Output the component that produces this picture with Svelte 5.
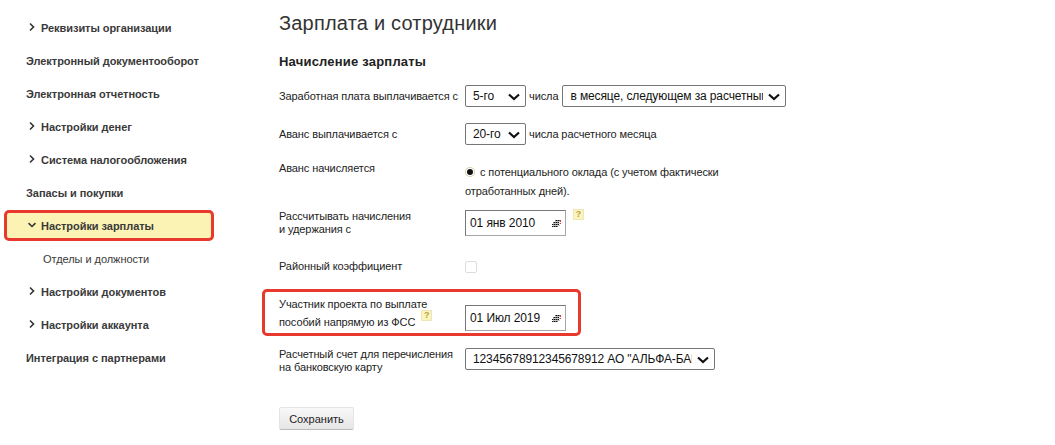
<script lang="ts">
    const menu = [
        { label: 'Реквизиты организации', arrow: 'right' },
        { label: 'Электронный документооборот' },
        { label: 'Электронная отчетность' },
        { label: 'Настройки денег', arrow: 'right' },
        { label: 'Система налогообложения', arrow: 'right' },
        { label: 'Запасы и покупки' },
        { label: 'Настройки зарплаты', arrow: 'down', active: true },
        { label: 'Отделы и должности', sub: true },
        { label: 'Настройки документов', arrow: 'right' },
        { label: 'Настройки аккаунта', arrow: 'right' },
        { label: 'Интеграция с партнерами' }
    ];
</script>

{#snippet chevron()}
    <svg class="select-arrow" width="14" height="8" viewBox="0 0 14 8">
        <path d="M2 1.5 L7 6 L12 1.5" fill="none" stroke="#111" stroke-width="2.2" />
    </svg>
{/snippet}

{#snippet calendar()}
    <svg class="cal" width="9" height="7" viewBox="0 0 9 7">
        <path d="M3 1h5v1H3zM1 3h7v1H1zM1 5h7v1H1z" fill="#c4c4c4" />
        <path d="M3 0h5v1H3zM1 2h6v1H1zM1 4h6v1H1zM0 6h6v1H0z" fill="#777" />
        <path d="M4 0h1v1H4zM6 0h1v1H6zM2 2h1v1H2zM4 2h1v1H4zM6 2h1v1H6zM0 4h1v1H0zM2 4h1v1H2zM4 4h1v1H4zM6 4h1v1H6zM0 6h1v1H0zM2 6h1v1H2zM4 6h1v1H4z" fill="#111" />
        <path d="M8 0h1v2H8zM8 3h1v1H8z" fill="#e0313a" />
    </svg>
{/snippet}

{#snippet hint()}
    <span class="hint">?</span>
{/snippet}

<div class="page">
    <nav class="sidebar">
        {#each menu as item}
            <a class="item" class:active={item.active} class:sub={item.sub} href="#top">
                {#if item.arrow === 'right'}
                    <svg class="arrow" width="8" height="10" viewBox="0 0 8 10">
                        <path d="M2 1.5 L5.5 5 L2 8.5" fill="none" stroke="#333" stroke-width="1.6" />
                    </svg>
                {:else if item.arrow === 'down'}
                    <svg class="arrow" width="8" height="10" viewBox="0 0 8 10">
                        <path d="M0.5 3.2 L4 6.5 L7.5 3.2" fill="none" stroke="#333" stroke-width="1.6" />
                    </svg>
                {/if}
                {item.label}
            </a>
        {/each}
    </nav>

    <main class="content">
        <h1>Зарплата и сотрудники</h1>
        <h2>Начисление зарплаты</h2>

        <div class="row row-salary">
            <div class="label">Заработная плата выплачивается с</div>
            <div class="field">
                <div class="select" style="width: 61px">
                    <select><option>5-го</option></select>
                    {@render chevron()}
                </div>
                <span class="after">числа</span>
                <div class="select" style="width: 224px">
                    <select><option>в месяце, следующем за расчетным</option></select>
                    {@render chevron()}
                </div>
            </div>
        </div>

        <div class="row row-advance">
            <div class="label">Аванс выплачивается с</div>
            <div class="field">
                <div class="select" style="width: 61px">
                    <select><option>20-го</option></select>
                    {@render chevron()}
                </div>
                <span class="after">числа расчетного месяца</span>
            </div>
        </div>

        <div class="row row-radio">
            <div class="label">Аванс начисляется</div>
            <div class="radio-text">
                <span class="radio"></span>с потенциального оклада (с учетом фактически отработанных дней).
            </div>
        </div>

        <div class="row row-date">
            <div class="label">Рассчитывать начисления<br />и удержания с</div>
            <div class="field">
                <div class="date">01 янв 2010 {@render calendar()}</div>
                {@render hint()}
            </div>
        </div>

        <div class="row row-check">
            <div class="label">Районный коэффициент</div>
            <span class="checkbox"></span>
        </div>

        <div class="row row-fss">
            <div class="label">
                Участник проекта по выплате<br />пособий напрямую из ФСС {@render hint()}
            </div>
            <div class="date">01 Июл 2019 {@render calendar()}</div>
            <span class="outline"></span>
        </div>

        <div class="row row-account">
            <div class="label">Расчетный счет для перечисления<br />на банковскую карту</div>
            <div class="select" style="width: 250px">
                <select><option>12345678912345678912 АО "АЛЬФА-БАНК"</option></select>
                {@render chevron()}
            </div>
        </div>

        <button class="save">Сохранить</button>
    </main>
</div>

<style>
    :global(body) {
        margin: 0;
        background: #fff;
        font-family: 'Liberation Sans', Arial, sans-serif;
        font-size: 11px;
        color: #333;
    }

    .page {
        display: flex;
        height: 445px;
        overflow: hidden;
    }

    .sidebar {
        width: 279px;
        flex: none;
        padding: 11px 0 0 5px;
        box-sizing: border-box;
        display: flex;
        flex-direction: column;
    }

    .item {
        width: 208px;
        height: 33px;
        box-sizing: border-box;
        display: flex;
        align-items: center;
        padding-left: 21px;
        font-size: 11px;
        font-weight: bold;
        letter-spacing: -0.05px;
        color: #3a3a3a;
        text-decoration: none;
        position: relative;
    }

    .item:has(.arrow) {
        padding-left: 36px;
    }

    .arrow {
        position: absolute;
        left: 23px;
        top: 11px;
    }

    .item.sub {
        padding-left: 38px;
        font-weight: normal;
    }

    .item.active {
        background: #fbf3b4;
        width: 210px;
        height: 31px;
        margin: 1px 0 1px -1px;
        border: 3px solid #e8392f;
        border-radius: 5px;
        padding-left: 34px;
    }

    .item.active .arrow {
        left: 21px;
        top: 7px;
    }

    .content {
        flex: 1;
        color: #222;
        letter-spacing: -0.1px;
    }

    h1 {
        margin: 12px 0 0;
        font-size: 20px;
        font-weight: normal;
        letter-spacing: 0.2px;
        line-height: 23px;
        color: #333;
    }

    h2 {
        margin: 19px 0 0;
        font-size: 13px;
        letter-spacing: 0.2px;
        line-height: 16px;
        color: #222;
    }

    .row {
        display: flex;
        position: relative;
    }

    .label {
        width: 186px;
        flex: none;
        line-height: 13px;
    }

    .field {
        display: flex;
        align-items: center;
    }

    .after {
        margin: 0 4px 0 3px;
    }

    .select {
        position: relative;
        height: 22px;
    }

    .select select {
        appearance: none;
        width: 100%;
        height: 100%;
        padding: 0 22px 0 7px;
        box-sizing: border-box;
        border: 1px solid #767676;
        border-radius: 2px;
        background: #fff;
        font-family: inherit;
        font-size: 12px;
        letter-spacing: -0.12px;
        color: #111;
    }

    .select-arrow {
        position: absolute;
        right: 5px;
        top: 8px;
        pointer-events: none;
    }

    .row-salary {
        margin-top: 15px;
        align-items: center;
    }

    .row-advance {
        margin-top: 16px;
        align-items: center;
    }

    .row-radio {
        margin-top: 17px;
    }

    .radio-text {
        width: 270px;
        line-height: 19px;
        padding-top: 1px;
    }

    .radio {
        display: inline-block;
        width: 6px;
        height: 6px;
        margin: 0 7px 0 2px;
        border-radius: 50%;
        background: #111;
        box-shadow: 0 0 0 1px #fff, 0 0 0 2px #d9cfa8;
        vertical-align: 1px;
    }

    .row-date {
        margin-top: 9px;
    }

    .date {
        width: 101px;
        height: 26px;
        box-sizing: border-box;
        border: 1px solid #a6a6a6;
        border-top-color: #777;
        border-left-color: #777;
        display: flex;
        align-items: center;
        justify-content: space-between;
        padding: 0 4px;
        font-size: 12px;
        color: #111;
    }

    .hint {
        display: inline-block;
        width: 9px;
        height: 9px;
        background: #fbf5bd;
        border: 1px solid #eee7b5;
        font-size: 9px;
        font-weight: bold;
        line-height: 9px;
        text-align: center;
        color: #b9a24a;
        vertical-align: 5px;
        margin-left: 3px;
    }

    .row-fss .hint {
        position: relative;
        top: -3px;
    }

    .row-date .hint {
        align-self: flex-start;
        margin: -1px 0 0 7px;
    }

    .row-check {
        margin-top: 24px;
        align-items: center;
    }

    .checkbox {
        width: 10px;
        height: 10px;
        border: 1px solid #ddd;
        border-radius: 2px;
    }

    .row-fss {
        margin-top: 21px;
    }

    .row-fss .label {
        line-height: 17px;
        padding-top: 2px;
    }

    .row-fss .date {
        margin-top: 11px;
    }

    .outline {
        position: absolute;
        left: -17px;
        top: -5px;
        width: 319px;
        height: 47px;
        box-sizing: border-box;
        border: 3px solid #e8392f;
        border-radius: 5px;
    }

    .row-account {
        margin-top: 17px;
    }

    .save {
        display: block;
        margin-top: 33px;
        width: 75px;
        height: 23px;
        padding: 0;
        border: 1px solid #e4e4e4;
        border-bottom-color: #bbb;
        border-radius: 2px;
        background: linear-gradient(#f8f8f8, #e6e6e6);
        font-family: inherit;
        font-size: 11px;
        color: #222;
    }
</style>
